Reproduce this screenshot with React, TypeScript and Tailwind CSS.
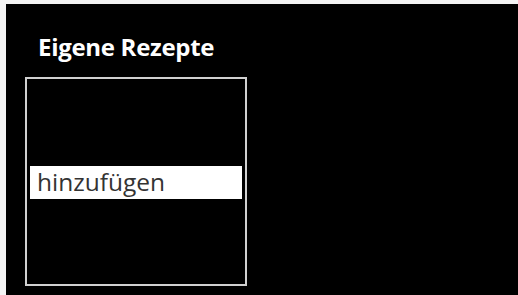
import React from 'react';

export default function App() {
  return (
    <div className="w-[518px] h-[295px] bg-[#f4f4f4] pl-[6px] pt-[4px] overflow-hidden">
      <div className="w-full h-full bg-black flex flex-col pl-[19px]" style={{ fontFamily: '"Open Sans", "Noto Sans", sans-serif' }}>
        {/* Title */}
        <div className="h-[73px] pt-[29px] pl-[13px]">
          <h1 className="text-[24px] leading-[28px] font-bold text-white tracking-[-0.3px]">Eigene Rezepte</h1>
        </div>

        {/* List box */}
        <div className="w-[222px] h-[209px] border-2 border-[#d0d0d0] px-[3px] pt-[87px]">
          <div className="h-[33px] bg-white flex items-center pl-[7px]">
            <span className="text-[24.5px] leading-none text-[#333333]">hinzufügen</span>
          </div>
        </div>
      </div>
    </div>
  );
}
